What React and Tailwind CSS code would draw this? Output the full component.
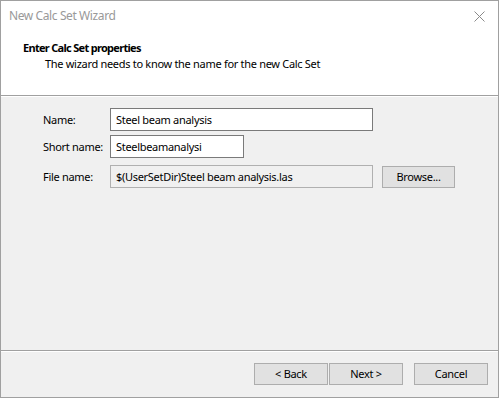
export default function App() {
  return (
    <div className="w-[499px] h-[398px] border border-[#a0a0a0] bg-[#f0f0f0] flex flex-col text-[11px] tracking-[-0.3px] text-black leading-[16px] font-['Noto_Sans',sans-serif] overflow-hidden">
      <div className="bg-white h-[94px] flex flex-col">
        <div className="h-[30px] flex items-center pl-[8px] pr-[13px]">
          <span className="text-[#999999] flex-1 text-[12px] tracking-[-0.4px]">New Calc Set Wizard</span>
          <svg width="11" height="11" viewBox="0 0 11 11" className="mt-[1px]">
            <path d="M0.5 0.5 L10.5 10.5 M10.5 0.5 L0.5 10.5" stroke="#8a8a8a" strokeWidth="1" />
          </svg>
        </div>
        <div className="pl-[22px] pt-[9px]">
          <div className="font-bold tracking-[-0.7px]">Enter Calc Set properties</div>
          <div className="pl-[22px] mt-[0px]">The wizard needs to know the name for the new Calc Set</div>
        </div>
      </div>
      <div className="h-[1px] bg-[#a0a0a0]" />
      <div className="h-[1px] bg-white" />
      <div className="flex-1 flex flex-col pl-[42px] pt-[11px]">
        <div className="flex items-center h-[23px]">
          <span className="w-[67px] whitespace-nowrap">Name:</span>
          <div className="w-[263px] h-[23px] border border-[#7a7a7a] bg-white flex items-center px-[5px]">Steel beam analysis</div>
        </div>
        <div className="flex items-center h-[23px] mt-[4px]">
          <span className="w-[67px] whitespace-nowrap">Short name:</span>
          <div className="w-[134px] h-[23px] border border-[#7a7a7a] bg-white flex items-center px-[5px]">Steelbeamanalysi</div>
        </div>
        <div className="flex items-center h-[23px] mt-[7px]">
          <span className="w-[67px] whitespace-nowrap">File name:</span>
          <div className="w-[263px] h-[23px] border border-[#b0b0b0] bg-[#f0f0f0] flex items-center px-[5px]">$(UserSetDir)Steel beam analysis.las</div>
          <div className="ml-[9px] w-[73px] h-[22px] border border-[#adadad] bg-[#e1e1e1] flex items-center justify-center">Browse...</div>
        </div>
      </div>
      <div className="h-[1px] bg-[#a0a0a0]" />
      <div className="h-[1px] bg-white" />
      <div className="h-[45px] flex items-center justify-end pr-[10px] pb-[1px]">
        <div className="w-[74px] h-[22px] border border-[#adadad] bg-[#e1e1e1] flex items-center justify-center">&lt; Back</div>
        <div className="ml-[1px] w-[74px] h-[22px] border border-[#adadad] bg-[#e1e1e1] flex items-center justify-center">Next &gt;</div>
        <div className="ml-[11px] w-[74px] h-[22px] border border-[#adadad] bg-[#e1e1e1] flex items-center justify-center">Cancel</div>
      </div>
    </div>
  );
}
